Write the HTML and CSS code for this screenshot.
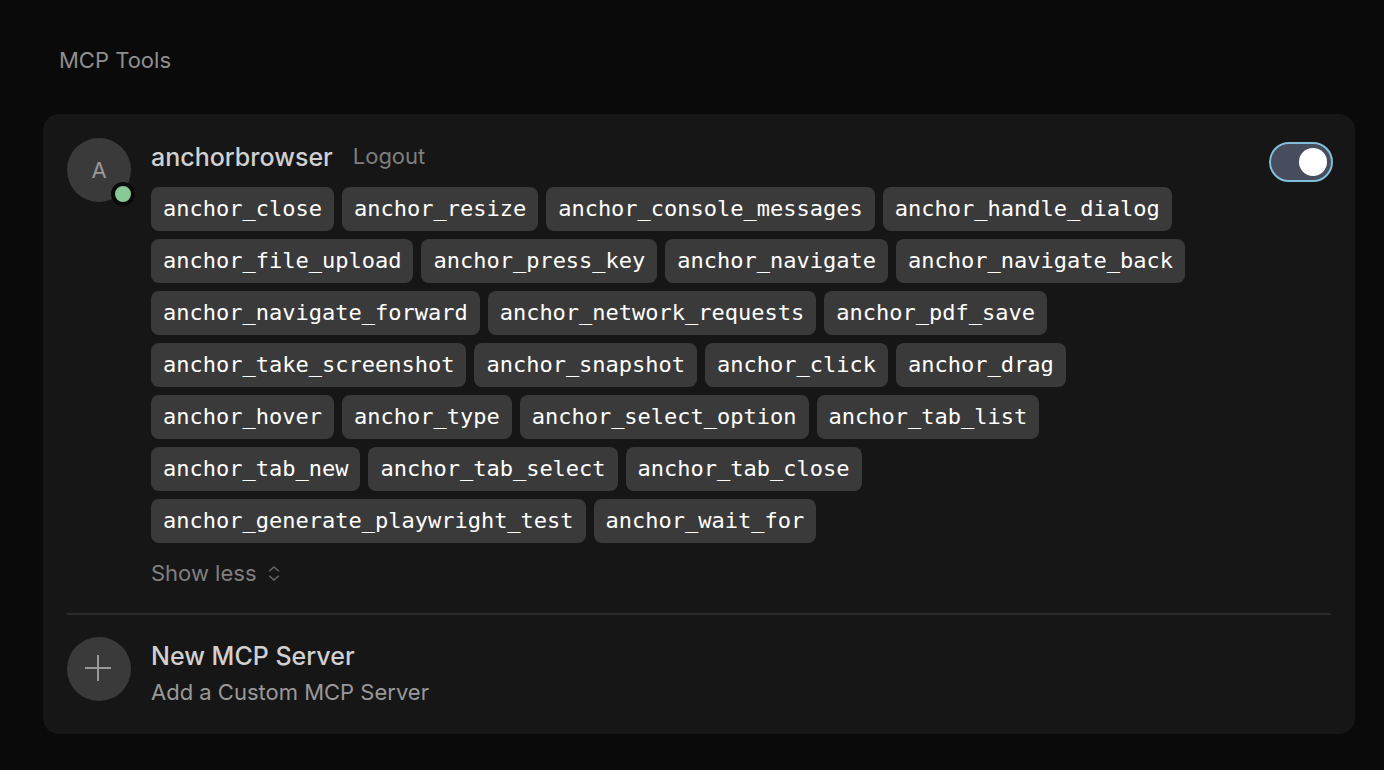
FILE: index.html
```html
<!DOCTYPE html>
<html lang="en">
<head>
<meta charset="utf-8">
<title>MCP Tools</title>
<link rel="stylesheet" href="styles.css">
</head>
<body>
<main class="page">
  <h1 class="section-title">MCP Tools</h1>
  <section class="card">
    <article class="server">
      <div class="avatar">A<span class="status"></span></div>
      <div class="server-body">
        <div class="server-head">
          <h2 class="server-name" id="server-name">anchorbrowser</h2>
          <button class="link-button logout" type="button">Logout</button>
        </div>
        <ul class="tools">
          <li class="tool">anchor_close</li>
          <li class="tool">anchor_resize</li>
          <li class="tool">anchor_console_messages</li>
          <li class="tool">anchor_handle_dialog</li>
          <li class="tool">anchor_file_upload</li>
          <li class="tool">anchor_press_key</li>
          <li class="tool">anchor_navigate</li>
          <li class="tool">anchor_navigate_back</li>
          <li class="tool">anchor_navigate_forward</li>
          <li class="tool">anchor_network_requests</li>
          <li class="tool">anchor_pdf_save</li>
          <li class="tool">anchor_take_screenshot</li>
          <li class="tool">anchor_snapshot</li>
          <li class="tool">anchor_click</li>
          <li class="tool">anchor_drag</li>
          <li class="tool">anchor_hover</li>
          <li class="tool">anchor_type</li>
          <li class="tool">anchor_select_option</li>
          <li class="tool">anchor_tab_list</li>
          <li class="tool">anchor_tab_new</li>
          <li class="tool">anchor_tab_select</li>
          <li class="tool">anchor_tab_close</li>
          <li class="tool">anchor_generate_playwright_test</li>
          <li class="tool">anchor_wait_for</li>
        </ul>
        <button class="link-button show-less" type="button">Show less
          <svg class="chevrons" viewBox="0 0 12 16" aria-hidden="true"><path d="M1.2 6.2L6 2l4.800 4.200M1.200 10.800L6 15l4.800-4.200"/></svg>
        </button>
      </div>
      <input class="toggle" type="checkbox" role="switch" checked aria-labelledby="server-name">
    </article>
    <button class="new-server" type="button">
      <span class="avatar"><svg class="plus" viewBox="0 0 28 28" aria-hidden="true"><path d="M13 0v26M0 13h26"/></svg></span>
      <span class="new-text">
        <span class="server-name">New MCP Server</span>
        <span class="new-hint">Add a Custom MCP Server</span>
      </span>
    </button>
  </section>
</main>
</body>
</html>
```
FILE: styles.css
```css
* { box-sizing: border-box; }

body {
  margin: 0;
  background: #0a0a0a;
  color: #999;
  font: 22px/28px Inter, "Liberation Sans", sans-serif;
}

button {
  margin: 0;
  padding: 0;
  border: 0;
  background: none;
  color: inherit;
  font: inherit;
  text-align: left;
  cursor: pointer;
}

.page { padding: 46px 29px 36px 43px; }

.section-title {
  margin: 0 16px 40px;
  color: #8f8f8f;
  font-size: 22px;
  font-weight: 400;
}

.card {
  padding: 24px 24px 28px;
  border-radius: 16px;
  background: #161616;
}

.server {
  display: flex;
  align-items: flex-start;
  gap: 20px;
  padding-bottom: 26px;
  border-bottom: 2px solid #2b2b2b;
}

.avatar {
  position: relative;
  display: flex;
  flex: none;
  align-items: center;
  justify-content: center;
  width: 64px;
  height: 64px;
  border-radius: 50%;
  background: #3a3a3a;
  color: #999;
}

.status {
  position: absolute;
  right: -4px;
  bottom: -4px;
  width: 24px;
  height: 24px;
  border: 4px solid #0a0a0a;
  border-radius: 50%;
  background: #88c998;
}

.server-body {
  flex: 1;
  min-width: 0;
}

.server-head {
  display: flex;
  align-items: flex-start;
  gap: 20px;
  margin-bottom: 11px;
}

.server-name {
  margin: 0;
  color: #d0d0d0;
  font-size: 25px;
  font-weight: 500;
  line-height: 38px;
}

.link-button { color: #7f7f7f; }

.logout { line-height: 36px; }

.tools {
  display: flex;
  flex-wrap: wrap;
  gap: 8px;
  margin: 0 0 16px;
  padding: 0;
  list-style: none;
}

.tool {
  padding: 8px 12px;
  border-radius: 8px;
  background: #3a3a3a;
  color: #fff;
  font: 22px/28px "DejaVu Sans Mono", monospace;
}

.show-less {
  display: flex;
  align-items: center;
  gap: 11px;
}

.chevrons {
  width: 12px;
  height: 16px;
  fill: none;
  stroke: #686868;
  stroke-width: 1.5;
}

.toggle {
  display: flex;
  flex: none;
  align-items: center;
  justify-content: flex-end;
  appearance: none;
  width: 64px;
  height: 40px;
  margin: 4px -2px 0 0;
  padding: 4px;
  border: 2px solid #82bfdb;
  border-radius: 20px;
  background: #474d5d;
  cursor: pointer;
}

.toggle::before {
  content: "";
  width: 28px;
  height: 28px;
  border-radius: 50%;
  background: #fff;
}

.toggle:not(:checked) {
  justify-content: flex-start;
  border-color: #3a3a3a;
  background: #2b2b2b;
}

.new-server {
  display: flex;
  align-items: flex-start;
  gap: 20px;
  width: 100%;
  padding-top: 22px;
}

.plus {
  width: 28px;
  height: 28px;
  fill: none;
  stroke: #999;
  stroke-width: 2;
}

.new-text {
  display: flex;
  flex-direction: column;
  gap: 3px;
}
```
